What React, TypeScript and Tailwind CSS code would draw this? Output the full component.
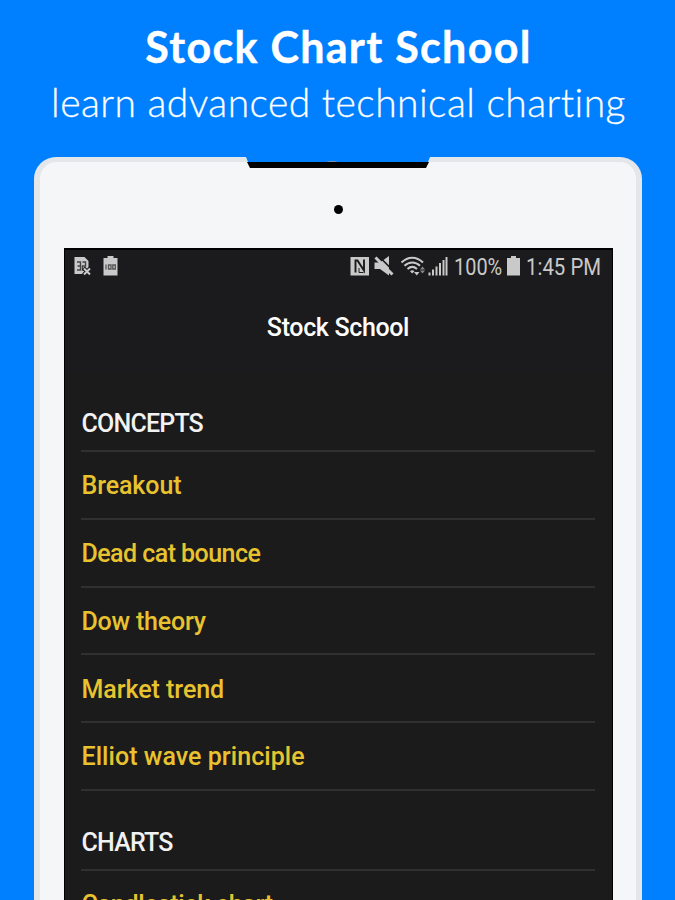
import type { ReactNode } from "react";

const CONCEPTS = [
  { name: "Breakout", tracking: "tracking-[-0.1px]" },
  { name: "Dead cat bounce", tracking: "tracking-[-0.55px]" },
  { name: "Dow theory", tracking: "tracking-[-0.2px]" },
  { name: "Market trend", tracking: "tracking-[-0.05px]" },
  { name: "Elliot wave principle", tracking: "tracking-[0.05px]" },
];

const StatusBar = () => {
  return (
    <div className="flex h-9 items-center justify-between pl-[8px] pr-[11px] text-[#c9c9c9]">
      <div className="flex items-center gap-[11px]">
        <svg className="h-[20px] w-[19px]" viewBox="0 0 18 20">
          <path d="M1 1h10l4 4v13H1z" fill="currentColor" />
          <path d="M3.500 6h3.500v8H3.500M4 10h3M9 6h3v4H9v4h2" fill="none" stroke="#444" strokeWidth="1.400" />
          <path d="M10 12l7 7M17 12l-7 7" stroke="#1b1b1d" strokeWidth="4" />
          <path d="M10.500 12.500l6 6M16.500 12.500l-6 6" stroke="currentColor" strokeWidth="2" />
        </svg>
        <svg className="h-[20px] w-[15px]" viewBox="0 0 15 20">
          <path d="M4.500 0h6v2H14.500v17.500H.5V2h4z" fill="currentColor" />
          <path d="M3 8.500v5M5.500 9h2.500v4H5.500zM9.800 9h2.500v4H9.800z" fill="none" stroke="#555" strokeWidth="1.300" />
        </svg>
      </div>
      <div className="flex items-center">
        <svg className="h-5 w-5" viewBox="0 0 20 20">
          <path d="M.5 1H19v18.500H.5z" fill="currentColor" />
          <path d="M5.500 16.500V4.500h2l6.500 10V3.500" fill="none" stroke="#1b1b1d" strokeWidth="1.900" />
          <path d="M9 12v4.500h4.500" fill="none" stroke="#1b1b1d" strokeWidth="1" />
        </svg>
        <svg className="ml-[4px] h-5 w-5" viewBox="0 0 20 20">
          <path d="M.5 6.500H6L15 0v19.500L6 13H.5z" fill="currentColor" />
          <path d="M4.500 0l16 16" stroke="#1b1b1d" strokeWidth="1.600" />
          <path d="M1.500 1.500l17 17" stroke="currentColor" strokeWidth="3" />
        </svg>
        <svg className="ml-[6px] h-5 w-[26px]" viewBox="0 0 26 20">
          <g fill="none" stroke="currentColor" strokeWidth="2">
            <path d="M1.500 6.500c6.500-6.500 15-6.500 21.500 0" />
            <path d="M4.500 9.800c4.500-4.300 11-4.300 15.500 0" />
            <path d="M7.500 13c3-2.700 6.500-2.700 9.500 0" />
          </g>
          <path d="M10 15.300c1.500-1.300 3-1.300 4.500 0L12.200 17.500z" fill="currentColor" />
          <path d="M14 16h5.500l-2.750 3.500z" fill="currentColor" />
          <path d="M20 13.500h5l-2.500-3z" fill="#888" />
          <path d="M20 14.500h5l-2.500 3z" fill="#888" />
        </svg>
        <svg className="ml-[2px] h-5 w-5" viewBox="0 0 20 20">
          <path d="M1.500 16.500v3M5 13.500v6M8.500 10.500v9M12 7v12.500M15.500 4v15.500M18.500 1v18.500" stroke="currentColor" strokeWidth="2" />
        </svg>
        <span className="ml-[6px] w-[49px] whitespace-nowrap pt-[2px] text-[24px] leading-9">
          <span className="inline-block origin-left scale-x-[0.83]">100%</span>
        </span>
        <svg className="ml-[4px] h-5 w-[13px]" viewBox="0 0 13 20">
          <path d="M4 0h5v2h4v17.500H0V2h4z" fill="currentColor" />
        </svg>
        <span className="ml-[6px] w-[75px] whitespace-nowrap pt-[2px] text-[24px] leading-9">
          <span className="inline-block origin-left scale-x-[0.85]">1:45 PM</span>
        </span>
      </div>
    </div>
  );
};

const SectionTitle = ({ children }: { children: ReactNode }) => {
  return (
    <h3 className="border-b-2 border-[#303030] pb-[10px] pl-[1px] text-[25px] font-medium leading-[32px] tracking-[-0.8px] text-[#f2f2f2]">
      {children}
    </h3>
  );
};

const Row = ({ children, className }: { children: ReactNode; className: string }) => {
  return (
    <li
      className={`flex h-[67.8px] items-center border-b-2 border-[#303030] pl-[1px] pt-[2px] text-[25px] font-medium text-[#e8c32f] ${className}`}
    >
      {children}
    </li>
  );
};

const App = () => {
  return (
    <div className="flex h-[900px] w-[675px] flex-col overflow-hidden bg-[#0080ff]">
      <header className="flex h-[157px] shrink-0 flex-col items-center whitespace-nowrap pl-[2px] pt-[19px] font-['Lato',sans-serif] text-white">
        <h1 className="text-[43px] font-bold leading-[55px] tracking-[1.3px] [-webkit-text-stroke:0.4px_white]">
          Stock Chart School
        </h1>
        <p className="text-[39px] font-light leading-[56px] tracking-[0.45px] [-webkit-text-stroke:0.3px_white]">
          learn advanced technical charting
        </p>
      </header>

      <main className="mx-auto flex h-[800px] w-[608px] shrink-0 flex-col items-center rounded-t-[22px] border-x-[6px] border-t-[5px] border-[#e4e7ea] bg-[#f5f6f8]">
        <svg className="-mt-[5px] h-[12px] w-[184px] shrink-0" viewBox="0 0 184 12">
          <path d="M0 0h184l-2 5H2z" fill="#0080ff" />
          <path d="M1 5h182l-3 6H4z" fill="#000" />
          <path d="M80 5q6-2 12 0z" fill="#8899aa" />
        </svg>
        <div className="ml-px mt-[36px] size-[9px] shrink-0 rounded-full bg-black" />

        <section className="ml-px mt-[34px] flex h-[700px] w-[549px] shrink-0 flex-col border-x border-t-2 border-black bg-[#1b1b1b] font-['Roboto',sans-serif]">
          <div className="h-[122px] bg-[#1b1b1d]">
            <div className="-mt-[2px]">
              <StatusBar />
            </div>
            <h2 className="pt-[28px] text-center text-[25px] font-medium leading-[32px] tracking-[-0.35px] text-white">
              Stock School
            </h2>
          </div>
          <div className="pl-[16px] pr-[17px] pt-[36px]">
            <SectionTitle>CONCEPTS</SectionTitle>
            <ul>
              {CONCEPTS.map((item) => (
                <Row key={item.name} className={item.tracking}>
                  {item.name}
                </Row>
              ))}
            </ul>
            <div className="h-[36px]" />
            <SectionTitle>CHARTS</SectionTitle>
            <ul>
              <Row className="tracking-[-0.25px]">Candlestick chart</Row>
            </ul>
          </div>
        </section>
      </main>
    </div>
  );
};

export default App;
